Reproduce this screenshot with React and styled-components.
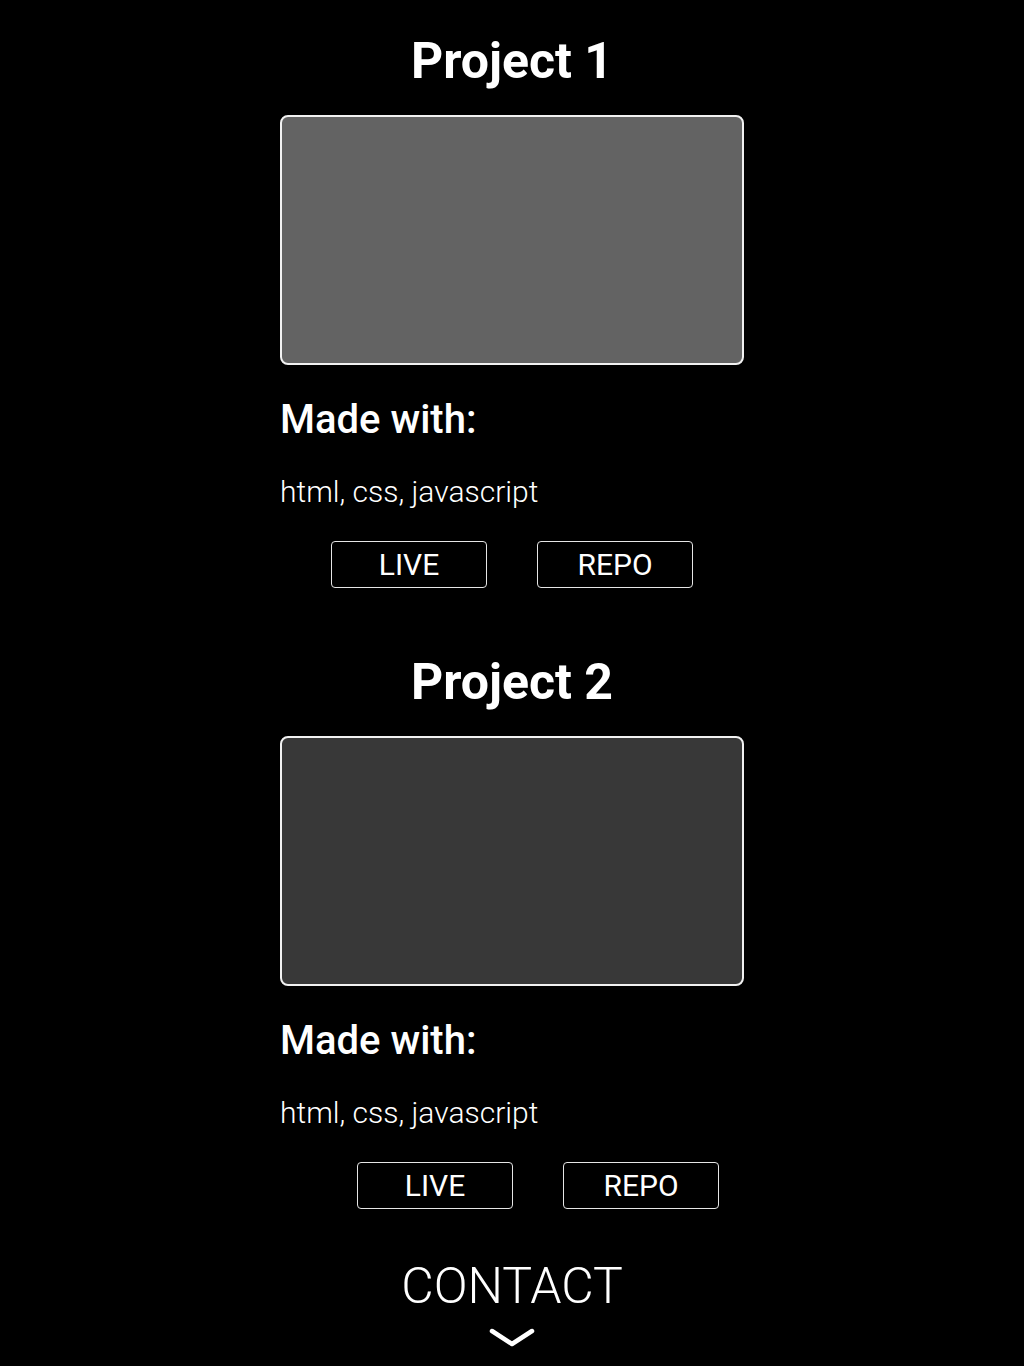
import React from 'react'
import styled, { createGlobalStyle } from 'styled-components'

const GlobalStyle = createGlobalStyle`
    html, body {
        margin:0;
        padding:0;
        background-color:#000;
    }
    body {
        font-family:Roboto, "Noto Sans", sans-serif;
        color:#fff;
    }
`

const projects = [
    { id: 1, title: 'Project 1', shade: '#636363', tech: 'html, css, javascript', shift: 0 },
    { id: 2, title: 'Project 2', shade: '#383838', tech: 'html, css, javascript', shift: 52 },
]

function Project({ title, shade, tech, shift }) {
    return (
        <Card>
            <Title>{title}</Title>
            <Preview $shade={shade} />
            <Label>Made with:</Label>
            <Tech>{tech}</Tech>
            <Buttons $shift={shift}>
                <LinkButton>LIVE</LinkButton>
                <LinkButton>REPO</LinkButton>
            </Buttons>
        </Card>
    )
}

function App() {
    return (
        <Page>
            <GlobalStyle />
            {projects.map(p => (
                <Project key={p.id} {...p} />
            ))}
            <Contact>
                <ContactTitle>CONTACT</ContactTitle>
                <svg width="46" height="24" viewBox="0 0 46 24">
                    <path d="M3 4 L23 17 L43 4" fill="none" stroke="#fff" strokeWidth="4.5" strokeLinecap="round" strokeLinejoin="round" />
                </svg>
            </Contact>
        </Page>
    )
}

export default App

const Page = styled.div`
    display:flex;
    flex-direction:column;
    align-items:center;
    padding-top:32px;
    gap:65px;
    min-height:1366px;
    box-sizing:border-box;
`
const Card = styled.section`
    width:464px;
    display:flex;
    flex-direction:column;
`
const Title = styled.h2`
    margin:0 0 25px;
    font-size:50px;
    line-height:58px;
    font-weight:700;
    text-align:center;
`
const Preview = styled.div`
    height:250px;
    box-sizing:border-box;
    border:2px solid #f2f2f2;
    border-radius:8px;
    background-color:${p => p.$shade};
`
const Label = styled.h3`
    margin:31px 0 0;
    font-size:40px;
    line-height:48px;
    font-weight:500;
`
const Tech = styled.p`
    margin:30px 0 0;
    font-size:30px;
    line-height:36px;
    font-weight:300;
`
const Buttons = styled.div`
    margin-top:31px;
    display:flex;
    justify-content:center;
    gap:50px;
    padding-left:${p => p.$shift}px;
`
const LinkButton = styled.a`
    width:156px;
    height:47px;
    box-sizing:border-box;
    border:1px solid #e6e6e6;
    border-radius:4px;
    display:flex;
    align-items:center;
    justify-content:center;
    font-size:30px;
    font-weight:400;
    color:#fff;
    cursor:pointer;
`
const Contact = styled.footer`
    margin-top:-17px;
    display:flex;
    flex-direction:column;
    align-items:center;
`
const ContactTitle = styled.h2`
    margin:0;
    font-size:50px;
    line-height:58px;
    font-weight:300;
    margin-bottom:12px;
`
